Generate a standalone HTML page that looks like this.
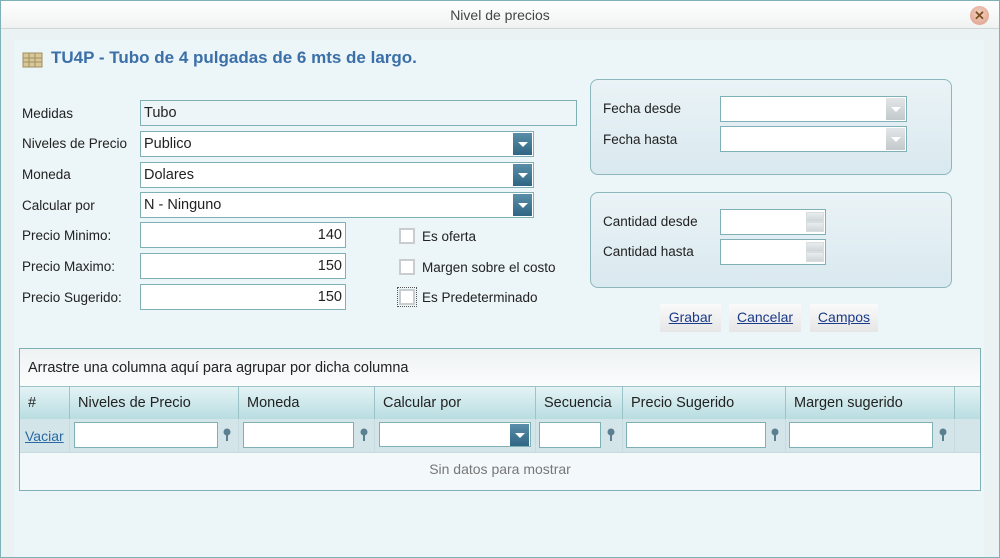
<!DOCTYPE html>
<html><head><meta charset="utf-8"><style>
*{box-sizing:border-box;margin:0;padding:0}
body{width:1000px;height:558px;overflow:hidden;font-family:"Liberation Sans",sans-serif;font-size:14px;color:#222;background:#fff}
.win{position:absolute;left:0;top:0;width:1000px;height:558px;background:#eaf2f4;box-shadow:inset 0 0 0 1px #7fb0b5}
.title{position:absolute;left:1px;top:1px;width:998px;height:28px;background:linear-gradient(#fff,#f0f2f2);border-bottom:1px solid #cfd6d8;text-align:center;line-height:28px;font-size:14px;color:#444}
.close{position:absolute;left:970px;top:6px;width:19px;height:19px;border-radius:50%;background:radial-gradient(circle at 50% 40%,#f5d2c4,#dc9a84);color:#7a5020;font-size:13px;line-height:19px;text-align:center;font-weight:bold}
.content{position:absolute;left:14px;top:40px;width:970px;height:517px;background:#ecf5f8}
.a{position:absolute}
.lbl{position:absolute;font-size:13.5px;color:#222}
.inp{position:absolute;background:#fff;border:1px solid #7fb0b5;height:26px;line-height:24px;padding:0 3px;font-size:14.5px}
.dd{position:absolute;right:1px;top:1px;width:19px;height:22px;background:linear-gradient(#5a8ea8,#2f6684);}
.dd:after{content:"";position:absolute;left:5px;top:9px;border-left:5px solid transparent;border-right:5px solid transparent;border-top:5px solid #fff}
.ddg{position:absolute;right:1px;top:1px;width:19px;height:22px;background:linear-gradient(#e2e6e8,#c2c8cb)}
.ddg:after{content:"";position:absolute;left:5px;top:9px;border-left:5px solid transparent;border-right:5px solid transparent;border-top:5px solid #fff}
.cb{position:absolute;width:16px;height:16px;border:2px solid #c9cdd0;background:#fff}
.box{position:absolute;border:1px solid #8cb8bd;border-radius:8px;background:linear-gradient(#eaf3f6,#d9e9ef)}
.btn{position:absolute;top:304px;height:28px;background:linear-gradient(#fafafa,#e6e6e6);text-align:center;line-height:27px;color:#1a3a8a;text-decoration:underline;font-size:14px}
.grid{position:absolute;left:19px;top:348px;width:962px;height:143px;border:1px solid #7fb0b5;background:#f3f8fa}
.hc{position:absolute;top:38px;height:32px;border-right:1px solid #9cc3c7;line-height:32px;padding-left:8px;background:linear-gradient(#e4f3f5,#b9dde1);font-size:14.5px}
.fc{position:absolute;top:70px;height:34px;border-right:1px solid #c7dbe0;background:#d4e5ea;border-bottom:1px solid #c7dbe0}
.fi{position:absolute;top:3px;height:26px;background:#fff;border:1px solid #7fb0b5}
.fil{position:absolute;top:9px;width:10px;height:14px}
.sp{position:absolute;right:1px;width:18px;height:10px;background:linear-gradient(#e8ecee,#cfd5d8);border:1px solid #d8dde0}
</style></head><body>
<div class="win">
<div class="title">Nivel de precios</div>
<div class="close">✕</div>
<div class="content"></div>

<svg class="a" style="left:22px;top:50px" width="22" height="18"><rect x="1" y="3" width="19" height="14" fill="#d9c79a" stroke="#a08f60"/><path d="M1 8h19M1 12h19M7 3v14M13 3v14" stroke="#a08f60"/></svg>
<div class="a" style="left:51px;top:48px;font-size:17px;font-weight:bold;color:#3a6fa8">TU4P - Tubo de 4 pulgadas de 6 mts de largo.</div>

<div class="lbl" style="left:22px;top:106px">Medidas</div>
<div class="inp" style="left:140px;top:100px;width:437px;background:#eef5f8">Tubo</div>
<div class="lbl" style="left:22px;top:136px">Niveles de Precio</div>
<div class="inp" style="left:140px;top:131px;width:394px">Publico<div class="dd"></div></div>
<div class="lbl" style="left:22px;top:167px">Moneda</div>
<div class="inp" style="left:140px;top:162px;width:394px">Dolares<div class="dd"></div></div>
<div class="lbl" style="left:22px;top:198px">Calcular por</div>
<div class="inp" style="left:140px;top:192px;width:394px">N - Ninguno<div class="dd"></div></div>
<div class="lbl" style="left:22px;top:228px">Precio Minimo:</div>
<div class="inp" style="left:140px;top:222px;width:206px;text-align:right">140</div>
<div class="lbl" style="left:22px;top:259px">Precio Maximo:</div>
<div class="inp" style="left:140px;top:253px;width:206px;text-align:right">150</div>
<div class="lbl" style="left:22px;top:290px">Precio Sugerido:</div>
<div class="inp" style="left:140px;top:284px;width:206px;text-align:right">150</div>

<div class="cb" style="left:399px;top:228px"></div><div class="lbl" style="left:422px;top:229px">Es oferta</div>
<div class="cb" style="left:399px;top:259px"></div><div class="lbl" style="left:422px;top:260px">Margen sobre el costo</div>
<div class="cb" style="left:399px;top:289px;outline:1px dotted #555;outline-offset:1px"></div><div class="lbl" style="left:422px;top:290px">Es Predeterminado</div>

<div class="box" style="left:590px;top:79px;width:362px;height:96px"></div>
<div class="lbl" style="left:603px;top:101px">Fecha desde</div>
<div class="inp" style="left:720px;top:96px;width:187px;height:26px"><div class="ddg"></div></div>
<div class="lbl" style="left:603px;top:132px">Fecha hasta</div>
<div class="inp" style="left:720px;top:126px;width:187px;height:26px"><div class="ddg"></div></div>

<div class="box" style="left:590px;top:192px;width:362px;height:96px"></div>
<div class="lbl" style="left:603px;top:214px">Cantidad desde</div>
<div class="inp" style="left:720px;top:209px;width:106px;height:26px"><div class="sp" style="top:2px"></div><div class="sp" style="top:12px"></div></div>
<div class="lbl" style="left:603px;top:244px">Cantidad hasta</div>
<div class="inp" style="left:720px;top:239px;width:106px;height:26px"><div class="sp" style="top:2px"></div><div class="sp" style="top:12px"></div></div>

<div class="btn" style="left:660px;width:61px">Grabar</div>
<div class="btn" style="left:729px;width:72px">Cancelar</div>
<div class="btn" style="left:810px;width:68px">Campos</div>

<div class="grid">
<div class="a" style="left:0;top:0;width:960px;height:38px;background:linear-gradient(#eef2f3,#fbfdfd);border-bottom:1px solid #9cc3c7;line-height:38px;padding-left:8px;font-size:14.5px">Arrastre una columna aquí para agrupar por dicha columna</div>
<div class="hc" style="left:0;width:50px">#</div>
<div class="hc" style="left:50px;width:169px">Niveles de Precio</div>
<div class="hc" style="left:219px;width:136px">Moneda</div>
<div class="hc" style="left:355px;width:161px">Calcular por</div>
<div class="hc" style="left:516px;width:87px">Secuencia</div>
<div class="hc" style="left:603px;width:163px">Precio Sugerido</div>
<div class="hc" style="left:766px;width:169px">Margen sugerido</div>
<div class="hc" style="left:935px;width:25px;border-right:none"></div>

<div class="fc" style="left:0;width:50px"><span class="a" style="left:5px;top:9px;color:#2a6aa0;text-decoration:underline">Vaciar</span></div>
<div class="fc" style="left:50px;width:169px"><div class="fi" style="left:4px;width:144px"></div><svg class="fil" style="left:152px" viewBox="0 0 10 14"><circle cx="5" cy="4" r="3.5" fill="#5a7f90"/><path d="M4 6h2v7h-2z" fill="#5a7f90"/></svg></div>
<div class="fc" style="left:219px;width:136px"><div class="fi" style="left:4px;width:111px"></div><svg class="fil" style="left:120px" viewBox="0 0 10 14"><circle cx="5" cy="4" r="3.5" fill="#5a7f90"/><path d="M4 6h2v7h-2z" fill="#5a7f90"/></svg></div>
<div class="fc" style="left:355px;width:161px"><div class="fi" style="left:4px;width:152px;height:25px"><div class="dd"></div></div></div>
<div class="fc" style="left:516px;width:87px"><div class="fi" style="left:3px;width:62px"></div><svg class="fil" style="left:70px" viewBox="0 0 10 14"><circle cx="5" cy="4" r="3.5" fill="#5a7f90"/><path d="M4 6h2v7h-2z" fill="#5a7f90"/></svg></div>
<div class="fc" style="left:603px;width:163px"><div class="fi" style="left:3px;width:140px"></div><svg class="fil" style="left:147px" viewBox="0 0 10 14"><circle cx="5" cy="4" r="3.5" fill="#5a7f90"/><path d="M4 6h2v7h-2z" fill="#5a7f90"/></svg></div>
<div class="fc" style="left:766px;width:169px"><div class="fi" style="left:3px;width:144px"></div><svg class="fil" style="left:152px" viewBox="0 0 10 14"><circle cx="5" cy="4" r="3.5" fill="#5a7f90"/><path d="M4 6h2v7h-2z" fill="#5a7f90"/></svg></div>
<div class="fc" style="left:935px;width:25px;border-right:none"></div>
<div class="a" style="left:0;top:112px;width:960px;text-align:center;color:#777;font-size:14px">Sin datos para mostrar</div>
</div>
</div>
</body></html>
